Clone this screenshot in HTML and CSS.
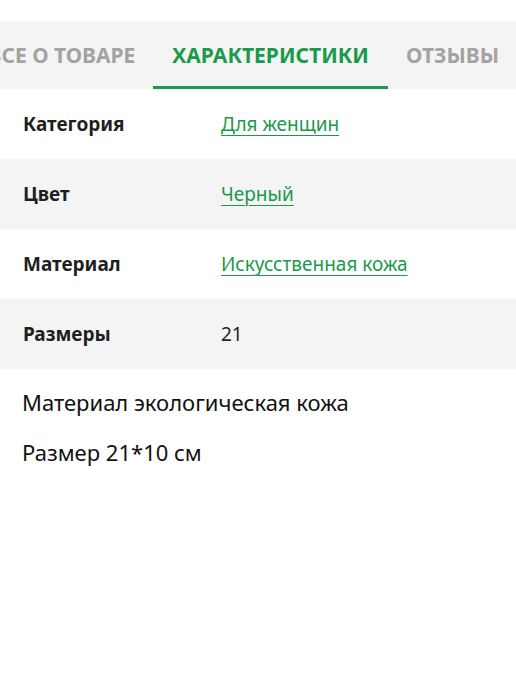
FILE: index.html
```html
<!DOCTYPE html>
<html lang="ru">
<head>
<meta charset="utf-8">
<link rel="stylesheet" href="styles.css">
</head>
<body>
<div class="page">
  <nav class="tabs">
    <div class="tab">ВСЕ О ТОВАРЕ</div>
    <div class="tab active">ХАРАКТЕРИСТИКИ</div>
    <div class="tab">ОТЗЫВЫ</div>
  </nav>
  <div class="specs">
    <div class="row"><div class="label">Категория</div><div class="value"><a href="#">Для женщин</a></div></div>
    <div class="row alt"><div class="label">Цвет</div><div class="value"><a href="#">Черный</a></div></div>
    <div class="row"><div class="label">Материал</div><div class="value"><a href="#">Искусственная кожа</a></div></div>
    <div class="row alt"><div class="label">Размеры</div><div class="value">21</div></div>
  </div>
  <div class="desc">
    <p>Материал экологическая кожа</p>
    <p>Размер 21*10 см</p>
  </div>
</div>
</body>
</html>
```
FILE: styles.css
```css
html, body {
  margin: 0;
  padding: 0;
  background: #fff;
}
.page {
  padding-top: 21px;
  font-family: "Noto Sans", "Liberation Sans", sans-serif;
  color: #1f1f1f;
}
.tabs {
  display: flex;
  justify-content: flex-end;
  overflow: hidden;
  background: #f4f4f4;
  height: 68px;
}
.tab {
  flex: none;
  padding: 0 18px;
  display: flex;
  align-items: center;
  font-size: 21px;
  font-weight: 700;
  color: #a3a3a3;
  white-space: nowrap;
  border-bottom: 3px solid transparent;
  box-sizing: border-box;
  padding-top: 3px;
}
.tab:last-child {
  padding-right: 17px;
}
.tab.active {
  padding: 3px 19px 0;
  color: #1a9a4a;
  border-bottom-color: #1a9a4a;
}
.row {
  display: grid;
  grid-template-columns: 198px 1fr;
  align-items: center;
  height: 70px;
  padding-left: 23px;
  font-size: 19px;
}
.row.alt {
  background: #f4f4f4;
}
.label {
  font-weight: 700;
  color: #1f1f1f;
}
.value {
  color: #1f1f1f;
}
.value a {
  color: #1a9a4a;
  text-decoration: underline;
  text-underline-offset: 4px;
  text-decoration-thickness: 1px;
}
.desc {
  padding: 18px 22px 0;
}
.desc p {
  margin: 0 0 20px;
  font-size: 22px;
  line-height: 30px;
  color: #111;
}
```
